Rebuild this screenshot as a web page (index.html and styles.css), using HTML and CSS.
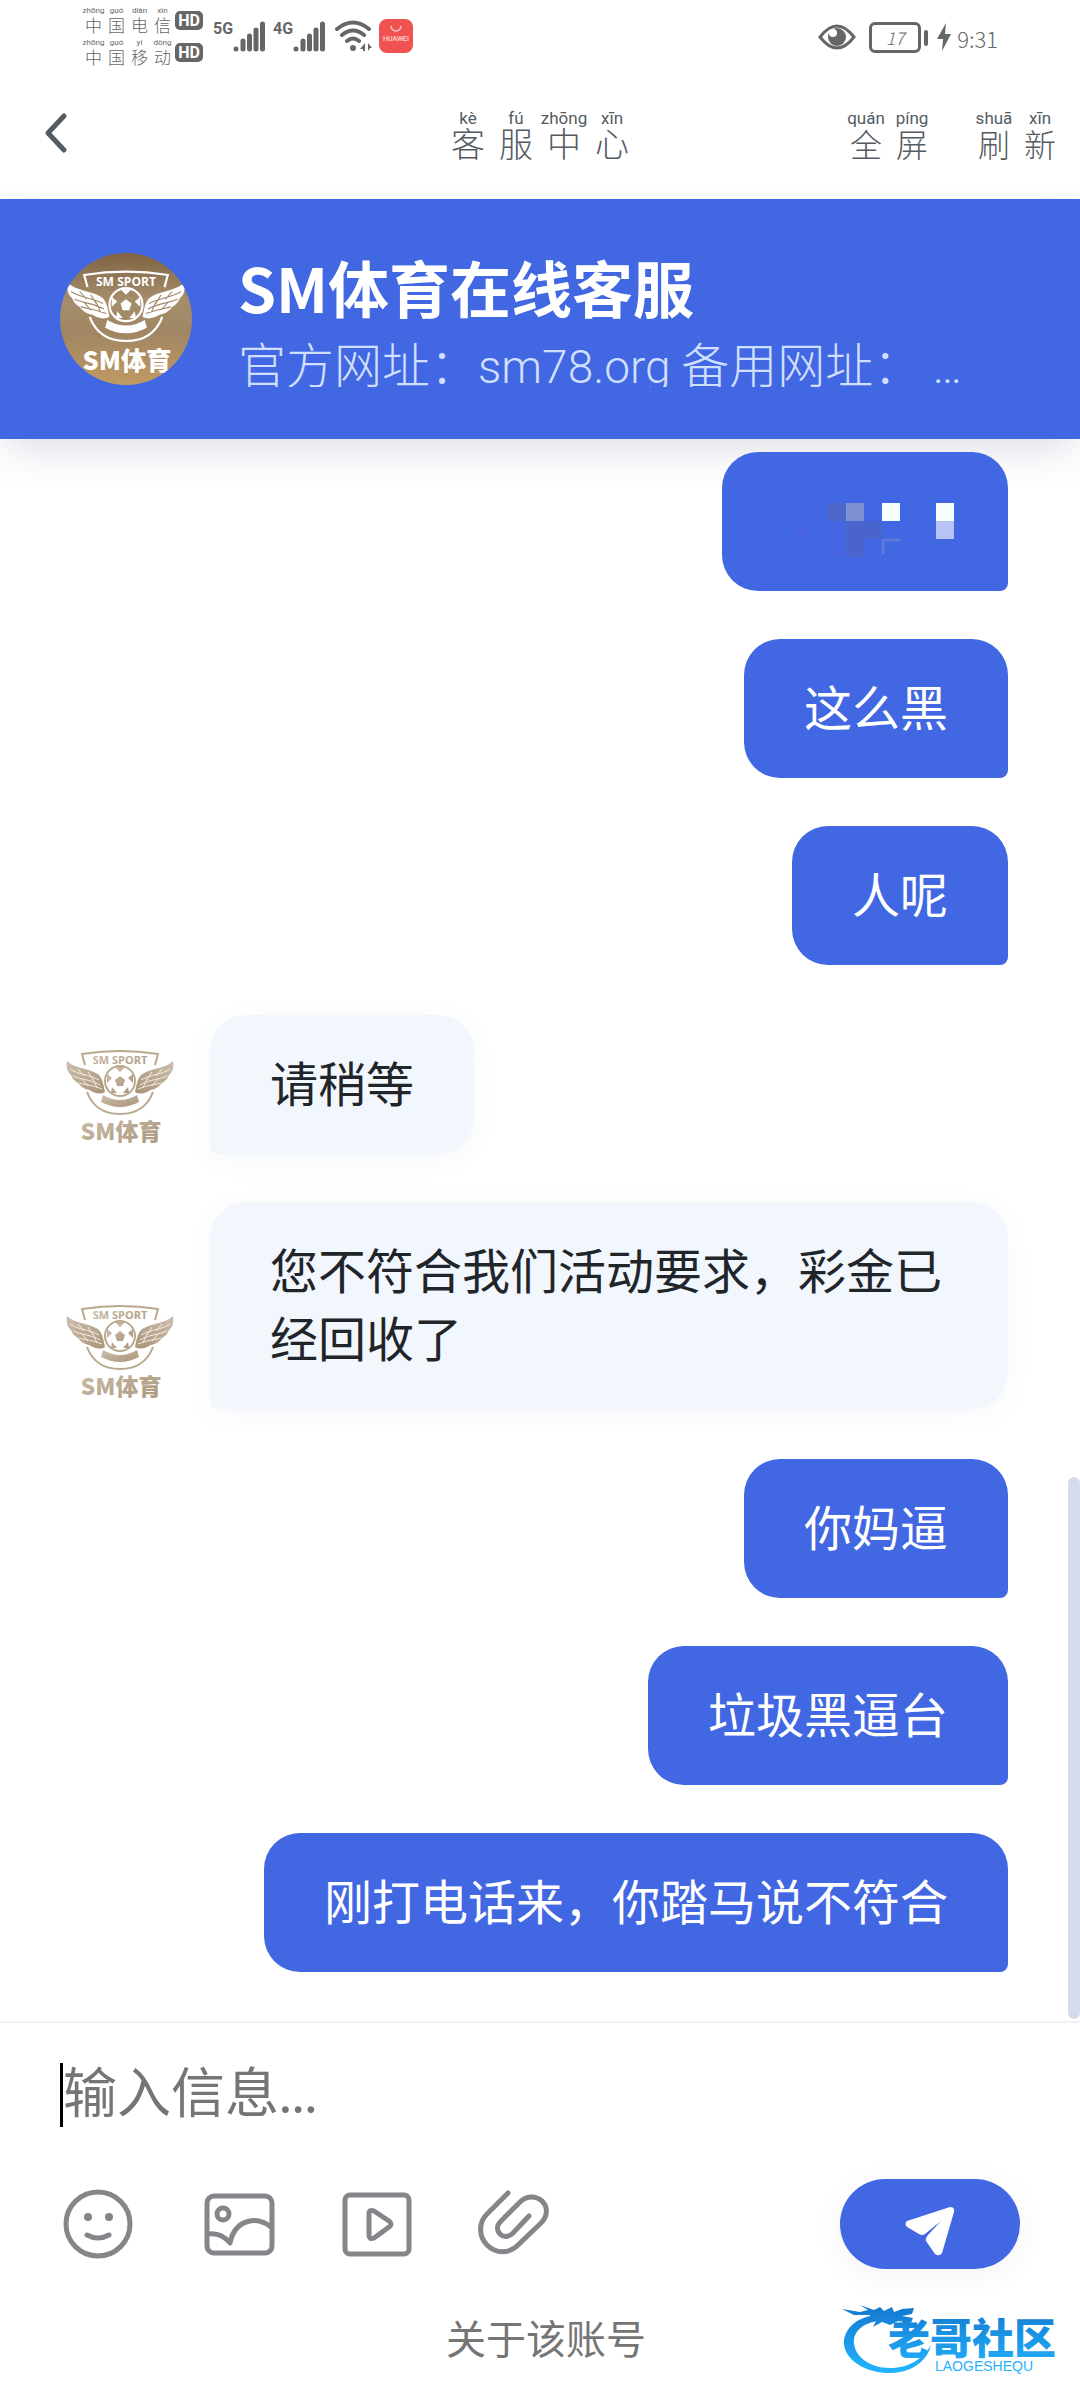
FILE: index.html
```html
<!DOCTYPE html>
<html lang="zh-CN">
<head>
<meta charset="utf-8">
<meta name="viewport" content="width=device-width, initial-scale=1">
<title>客服中心</title>
<link rel="stylesheet" href="styles.css">
</head>
<body>
<svg class="defs" width="0" height="0" aria-hidden="true">
  <defs>
    <linearGradient id="tan" x1="0" y1="0" x2="1" y2="1">
      <stop offset="0" stop-color="#cdbfae"/><stop offset="1" stop-color="#a89478"/>
    </linearGradient>
    <symbol id="wing" viewBox="0 0 40 34">
      <path d="M1 1 C8 8 20 8 30 13 C36 16 37 22 39 32 C34 35 28 33 23 30 C18 29 14 26 12 23 C8 21 6 18 5 15 C1 12 0 7 1 1Z"/>
      <path class="feather" d="M4 9 C13 15 22 14 33 20 M7 16 C16 20 23 19 34 25 M13 23 C20 25 26 25 36 29 M12 9 L18 16 M22 12 L27 20 M16 19 L22 26 M27 19 L31 28"/>
    </symbol>
    <symbol id="crest" viewBox="0 0 120 120">
      <path class="line" d="M25 31 L22 20 Q60 14 98 20 L95 31 M27 58 C33 74 46 80 60 80 C74 80 87 74 93 58"/>
      <text class="crest-arc" x="60" y="30" text-anchor="middle">SM SPORT</text>
      <use href="#wing" x="6" y="26" width="40" height="34"/>
      <use href="#wing" x="6" y="26" width="40" height="34" transform="translate(120 0) scale(-1 1)"/>
      <circle class="line" cx="60" cy="47" r="15"/>
      <path d="M60 42l5 4-2 6h-6l-2-6z M55 33h10l-5 5z M47 40l5 4-5 5z M73 40l-5 4 5 5z M51 59l1-6 5 6z M69 59l-1-6-5 6z"/>
      <path d="M43 61 Q60 71 77 61 L79 68 Q60 78 41 68Z"/>
      <text class="crest-name" x="61" y="106" text-anchor="middle">SM体育</text>
    </symbol>
    <symbol id="bars" viewBox="0 0 32 31">
      <path d="M3 28v0 M10 28v-8 M16.500 28v-13 M23 28v-19 M29.500 28v-25" stroke="currentColor" stroke-width="5" stroke-linecap="round"/>
    </symbol>
  </defs>
</svg>

<div class="status">
  <div class="carriers">
    <div class="carrier"><ruby>中<rt>zhōng</rt></ruby><ruby>国<rt>guó</rt></ruby><ruby>电<rt>diàn</rt></ruby><ruby>信<rt>xìn</rt></ruby><span class="hd">HD</span></div>
    <div class="carrier"><ruby>中<rt>zhōng</rt></ruby><ruby>国<rt>guó</rt></ruby><ruby>移<rt>yí</rt></ruby><ruby>动<rt>dòng</rt></ruby><span class="hd">HD</span></div>
  </div>
  <div class="signal"><span>5G</span><svg width="32" height="31"><use href="#bars"/></svg></div>
  <div class="signal"><span>4G</span><svg width="32" height="31"><use href="#bars"/></svg></div>
  <svg class="wifi" width="38" height="32" viewBox="0 0 38 32" fill="none" stroke="currentColor" stroke-width="4" stroke-linecap="round">
    <path d="M2 9 Q18 -4 34 9 M7 15 Q18 6 29 15 M12 21 Q18 16 24 21"/>
    <circle cx="18" cy="28" r="3" fill="currentColor" stroke="none"/>
    <path d="M30 23v8h-2v-2h-3z M33 31v-8l4 5h-2z" fill="currentColor" stroke="none"/>
  </svg>
  <svg width="34" height="34" viewBox="0 0 34 34">
    <rect width="34" height="34" rx="8" fill="#ef5250"/>
    <path d="M12 7 a5 5 0 0 0 10 0" fill="none" stroke="#ffc4c0" stroke-width="1.500"/>
    <text class="huawei" x="17" y="22" text-anchor="middle">HUAWEI</text>
  </svg>
  <div class="status-right">
    <svg width="38" height="26" viewBox="0 0 38 26">
      <path d="M2 13 Q19 -9 36 13 Q19 35 2 13Z" fill="none" stroke="currentColor" stroke-width="3"/>
      <circle cx="19" cy="13" r="9" fill="currentColor"/><circle cx="15" cy="9" r="4" fill="#fff"/>
    </svg>
    <span class="battery">17</span>
    <svg class="bolt" width="14" height="28" viewBox="0 0 14 28"><path d="M9 0 L0 16 H6 L5 28 L14 11 H8Z" fill="currentColor"/></svg>
    <time>9:31</time>
  </div>
</div>

<nav class="nav">
  <button class="back" aria-label="返回"><svg width="24" height="42" viewBox="0 0 24 42"><path d="M20 4 L4 21 L20 38" fill="none" stroke="currentColor" stroke-width="5" stroke-linecap="round" stroke-linejoin="round"/></svg></button>
  <h1 class="nav-title"><ruby>客<rt>kè</rt></ruby><ruby>服<rt>fú</rt></ruby><ruby>中<rt>zhōng</rt></ruby><ruby>心<rt>xīn</rt></ruby></h1>
  <div class="nav-actions">
    <button><ruby>全<rt>quán</rt></ruby><ruby>屏<rt>píng</rt></ruby></button>
    <button><ruby>刷<rt>shuā</rt></ruby><ruby>新<rt>xīn</rt></ruby></button>
  </div>
</nav>

<header class="agent">
  <div class="agent-avatar"><svg class="crest" viewBox="0 0 120 120"><use href="#crest"/></svg></div>
  <div class="agent-text">
    <h2>SM体育在线客服</h2>
    <p>官方网址：<span>sm78.org</span> 备用网址：<span>&nbsp;…</span></p>
  </div>
</header>

<main class="chat">
  <div class="group mine">
    <div class="bubble masked">
      <svg width="166" height="68" viewBox="0 0 166 68" aria-hidden="true">
        <g transform="translate(0 3)">
        <path d="M46 16h18v18H46z" fill="#4c66cc"/><path d="M64 16h18v18H64z" fill="#7c90d2"/>
        <path d="M10 35h18v18H10z M46 35h18v34H46z" fill="#4665e2"/><path d="M64 34h36v18H82v18H64z" fill="#4a64ce"/>
        <path d="M100 16h18v18h-18z M154 16h18v18h-18z" fill="#f5fdff"/><path d="M154 34h18v18h-18z" fill="#b6c3f4"/>
        <path d="M101 67V53h17" fill="none" stroke="#5f79d8" stroke-width="3"/>
        </g>
      </svg>
    </div>
    <div class="bubble">这么黑</div>
    <div class="bubble">人呢</div>
  </div>
  <div class="group theirs">
    <div class="row"><svg class="crest small" viewBox="0 0 120 120"><use href="#crest"/></svg><div class="bubble">请稍等</div></div>
    <div class="row"><svg class="crest small" viewBox="0 0 120 120"><use href="#crest"/></svg><div class="bubble">您不符合我们活动要求，彩金已经回收了</div></div>
  </div>
  <div class="group mine">
    <div class="bubble">你妈逼</div>
    <div class="bubble">垃圾黑逼台</div>
    <div class="bubble">刚打电话来，你踏马说不符合</div>
  </div>
  <div class="thumb"></div>
</main>

<form class="composer">
  <label class="field"><input type="text" placeholder="输入信息..." aria-label="输入信息"></label>
  <div class="tools">
    <button type="button" aria-label="表情"><svg viewBox="0 0 72 72"><circle cx="36" cy="36" r="32"/><path d="M25 47 Q36 53 47 47"/><circle class="dot" cx="26" cy="29" r="4"/><circle class="dot" cx="47" cy="29" r="4"/></svg></button>
    <button type="button" aria-label="图片"><svg viewBox="0 0 72 72"><rect x="6" y="8" width="65" height="57" rx="7"/><circle cx="22" cy="26" r="6"/><path d="M7 46 Q20 44 29 55 C34 30 58 28 70 39"/></svg></button>
    <button type="button" aria-label="视频"><svg viewBox="0 0 72 72"><rect x="5" y="7" width="64" height="59" rx="5"/><path d="M29 26 Q29 21 34 23 L49 33 Q53 36 49 39 L34 50 Q29 52 29 47Z"/></svg></button>
    <button type="button" aria-label="附件"><svg viewBox="0 0 72 72"><path d="M29 5 L8 26 C-1 35 0 49 8 57 C17 66 30 66 39 57 L62 35 C69 28 69 19 63 13 C56 7 47 8 41 14 L22 33 C17 38 18 43 21 46 C25 50 30 49 34 45 L50 28"/></svg></button>
    <button class="send" aria-label="发送"><svg width="50" height="50" viewBox="0 0 50 50"><path d="M2 14 L45 0 Q50 0 49 5 L37 46 Q34 50 30 47 L21 34 Q20 31 23 28 L36 14 L20 27 Q17 29 14 27 L2 20 Q-1 17 2 14Z" fill="#fff"/></svg></button>
  </div>
</form>

<footer class="footer">
  <a href="#about">关于该账号</a>
  <svg class="mark" width="222" height="72" viewBox="0 0 222 72">
    <defs><linearGradient id="sky" gradientUnits="userSpaceOnUse" x1="0" y1="4" x2="0" y2="70"><stop offset="0" stop-color="#1479d0"/><stop offset="1" stop-color="#22b6ff"/></linearGradient></defs>
    <g fill="url(#sky)">
      <path d="M38 12 C10 13 1 30 2 42 C5 60 28 71 50 70 C72 69 86 56 89 42 C80 58 64 65 48 65 C28 65 13 54 12 40 C11 28 22 19 38 18Z"/>
      <path d="M0 6 L18 9 L26 7 L18 2 L32 7 L38 4 L42 8 L50 4 L52 9 L60 6 L72 5 L70 11 L60 13 L71 15 L69 20 L56 18 L48 22 L40 19 L31 24 L35 16 L26 20 L28 12 L12 12Z"/>
      <text class="mark-name" x="46" y="51">老哥社区</text>
      <text class="mark-latin" x="93" y="68">LAOGESHEQU</text>
    </g>
  </svg>
</footer>
</body>
</html>
```
FILE: styles.css
```css
* { box-sizing: border-box; }
body {
  margin: 0;
  min-height: 100vh;
  display: flex;
  flex-direction: column;
  background: #fff;
  font-family: "Noto Sans CJK SC", "Noto Sans", sans-serif;
  font-size: 48px;
  color: #212529;
}
h1, h2, p { margin: 0; font-weight: 400; }
button { border: 0; padding: 0; background: none; font: inherit; color: inherit; cursor: pointer; }
svg { display: block; flex: none; }
.defs { position: absolute; }

/* characters with pinyin above */
ruby { display: flex; flex-direction: column-reverse; align-items: center; }
rt { display: block; font-size: inherit; }

/* status bar */
.status { display: flex; align-items: flex-start; padding: 6px 82px 0 82px; height: 72px; color: #666; }
.carriers { display: grid; gap: 4px; margin-right: 12px; }
.carrier { display: flex; font-size: 17px; line-height: 18px; font-weight: 300; }
.carrier ruby { width: 23px; }
.carrier rt { font: 8px/10px Roboto, sans-serif; white-space: nowrap; }
.hd { align-self: center; margin-left: 1px; width: 28px; border-radius: 5px; background: #666; color: #fff; font: 700 16px/19px Roboto, sans-serif; text-align: center; }
.signal { display: flex; margin: 15px 10px 0 0; gap: 2px; }
.signal span { width: 16px; font: 700 16px/16px Roboto, sans-serif; display: flex; justify-content: center; }
.wifi { margin: 14px 6px 0 0; }
.wifi + svg { margin-top: 13px; }
.huawei { font: 500 7px Roboto, sans-serif; fill: #ffd8d4; }
.status-right { display: flex; align-items: center; margin: 14px 0 0 auto; height: 34px; font-weight: 300; }
.battery { position: relative; width: 52px; height: 31px; margin: 0 16px 0 13px; border: 3px solid #666; border-radius: 6px; font-size: 17px; line-height: 25px; text-align: center; font-style: italic; }
.battery::after { content: ""; position: absolute; right: -10px; top: 5px; width: 4px; height: 16px; border-radius: 2px; background: #666; }
.status-right time { font-size: 22px; line-height: 24px; margin: 2px 0 0 6px; }

/* page navigation */
.nav { display: grid; grid-template-columns: 1fr auto 1fr; align-items: center; padding: 36px 0 41px; color: #555b62; font-weight: 300; }
.back { justify-self: start; padding-left: 44px; }
.nav-title { display: flex; font-size: 34px; line-height: 30px; font-weight: 300; }
.nav-title ruby { width: 48px; }
.nav rt { font: 17px/20px Roboto, sans-serif; white-space: nowrap; }
.nav-actions { display: flex; justify-content: flex-end; gap: 36px; padding-right: 17px; font-size: 32px; line-height: 30px; }
.nav-actions button { display: flex; }
.nav-actions ruby { width: 46px; }

/* agent header */
.agent { display: flex; align-items: center; gap: 46px; padding: 52px 60px; background: #4267e2; color: #fff; box-shadow: 0 16px 36px -6px rgba(60, 70, 120, .18); min-height: 240px; }
.agent-avatar { flex: none; width: 132px; height: 132px; overflow: hidden; border-radius: 50%; background: linear-gradient(#7e6341, #a58d6c 35%, #a08663 60%, #c09a62); color: #fff; --gap: #a1886a; }
.agent-text { flex: 1; min-width: 0; display: grid; gap: 16px; }
.agent h2 { font-size: 61px; line-height: 72px; font-weight: 700; }
.agent p { overflow: hidden; white-space: nowrap; height: 48px; line-height: 46px; font-weight: 300; color: #cfdfff; }
.agent p span { font-family: Roboto, sans-serif; font-size: 46px; line-height: 0; }

/* crest */
.crest { width: 100%; height: 100%; fill: currentColor; }
.crest.small { width: 120px; height: 120px; color: #b9a78f; fill: url(#tan); --gap: #f3ede4; }
.line { fill: none; stroke: currentColor; stroke-width: 2; }
.feather { fill: none; stroke: var(--gap); stroke-width: 1; }
.crest-arc { font: 700 11px "Open Sans", sans-serif; }
.crest-name { font: 900 23px "Noto Sans CJK SC", sans-serif; }

/* conversation */
.chat { position: relative; flex: 1; display: flex; flex-direction: column; gap: 50px; padding: 13px 72px 48px 60px; }
.group { display: flex; flex-direction: column; gap: 48px; }
.mine { align-items: flex-end; }
.row { display: flex; align-items: flex-end; gap: 30px; }
.bubble { padding: 32px 60px 39px; border-radius: 36px; line-height: 68px; }
.mine .bubble { background: #4267e2; color: #fff; border-bottom-right-radius: 8px; }
.theirs .bubble { background: #f2f6fd; border-bottom-left-radius: 8px; box-shadow: 0 6px 24px rgba(120, 140, 190, .06); }
.masked svg { overflow: visible; }
.thumb { position: absolute; right: 0; bottom: 2px; width: 12px; height: 542px; border-radius: 6px; background: #d6dbec; }

/* composer */
.composer { border-top: 2px solid #eff3f8; padding: 40px 60px 0; display: grid; gap: 52px; }
.field { display: flex; border-left: 3px solid #000; height: 64px; }
.field input { flex: 1; min-width: 0; border: 0; padding: 0 0 4px; outline: 0; background: none; font: 54px/60px Lato, "Noto Sans CJK SC", sans-serif; color: inherit; }
.field input::placeholder { color: #757575; opacity: 1; }
.tools { display: flex; align-items: center; gap: 67px; padding-left: 2px; }
.tools button { width: 72px; height: 72px; }
.tools button:not(.send) svg { width: 72px; height: 72px; overflow: visible; fill: none; stroke: #85868a; stroke-width: 5; stroke-linecap: round; stroke-linejoin: round; }
.tools .dot { fill: #85868a; stroke: none; }
.tools .send { display: flex; align-items: center; justify-content: center; width: 180px; height: 90px; padding-top: 16px; margin-left: auto; border-radius: 45px; background: #4267e2; box-shadow: 0 6px 30px rgba(60, 70, 120, .06); }

.footer { position: relative; display: flex; justify-content: center; padding: 38px 0 33px 12px; }
.footer a { font-size: 40px; line-height: 60px; color: #757575; text-decoration: none; }
.mark { position: absolute; right: 16px; bottom: 25px; }
.mark-name { font: 900 42px "Noto Sans CJK SC", sans-serif; }
.mark-latin { font: 14px "Liberation Sans", sans-serif; }
```
